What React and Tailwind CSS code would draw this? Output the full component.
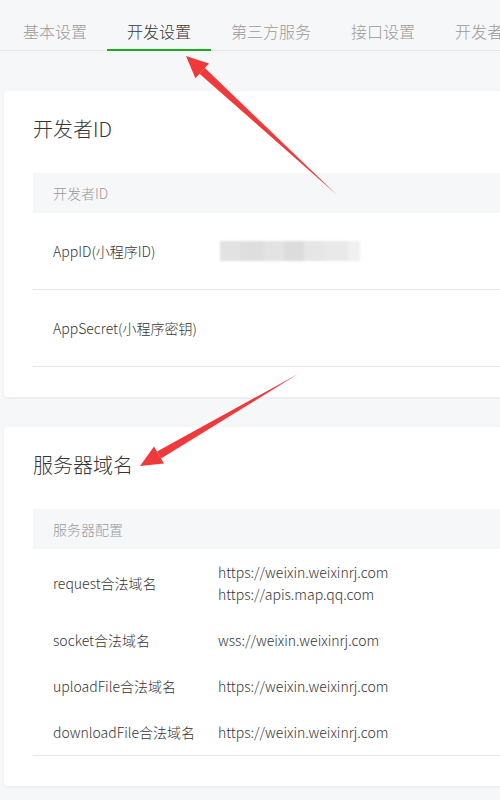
import React from 'react';

const tabs = ['基本设置', '开发设置', '第三方服务', '接口设置', '开发者工具'];

const serverRows = [
    { label: 'request合法域名', values: ['https://weixin.weixinrj.com', 'https://apis.map.qq.com'] },
    { label: 'socket合法域名', values: ['wss://weixin.weixinrj.com'] },
    { label: 'uploadFile合法域名', values: ['https://weixin.weixinrj.com'] },
    { label: 'downloadFile合法域名', values: ['https://weixin.weixinrj.com'] },
];

const Card = ({ title, head, children }) => (
    <div className="bg-white rounded shadow-[0_1px_3px_rgba(0,0,0,0.06)] pt-6 pb-[30px] pl-[29px]">
        <h2 className="text-xl leading-7 text-[#353535]">{title}</h2>
        <div className="mt-[30px]">
            <div className="h-10 flex items-center px-5 bg-[#f6f7f9] text-sm text-[#9a9a9a]">{head}</div>
            {children}
        </div>
    </div>
);

// red annotation arrows drawn on top of the page
const Arrows = () => (
    <svg className="absolute inset-0 pointer-events-none" width="500" height="800" viewBox="0 0 500 800">
        <polygon points="337,195 199.5,73.8 204.9,68" fill="#f0393b" />
        <polygon points="186,56 195.4,78.3 209,63.5" fill="#f0393b" />
        <polygon points="298,374 161,458.5 157,451.5" fill="#f0393b" />
        <polygon points="140,466 164,463.6 154,446.4" fill="#f0393b" />
    </svg>
);

export default function App() {
    return (
        <div
            className="relative w-[500px] h-[800px] overflow-hidden bg-[#f6f7f9] font-light"
            style={{ fontFamily: '"Noto Sans CJK SC", "Noto Sans", sans-serif' }}
        >
            <div className="w-[560px]">
                {/* Tabs */}
                <div className="flex pl-[3px] border-b border-[#e5e5e5]">
                    {tabs.map((t, i) => (
                        <div
                            key={t}
                            className={`px-5 pt-[19px] pb-[6px] -mb-px text-base leading-6 whitespace-nowrap border-b-2 ${
                                i === 1 ? 'border-[#1aad19] text-[#353535]' : 'border-transparent text-[#9a9a9a]'
                            }`}
                        >
                            {t}
                        </div>
                    ))}
                </div>

                <div className="pl-1 pt-[40px] flex flex-col gap-[30px]">
                    <Card title="开发者ID" head="开发者ID">
                        <div className="h-[77px] flex items-center px-5 border-b border-[#e7e7e7] text-sm text-[#353535]">
                            <div className="w-[165px] shrink-0">AppID(小程序ID)</div>
                            <div className="flex h-5 ml-[2px] blur-[1px]">
                                <div className="w-5 bg-[#e2e2e2]" />
                                <div className="w-6 bg-[#dedede]" />
                                <div className="w-5 bg-[#e3e3e3]" />
                                <div className="w-5 bg-[#dcdcdc]" />
                                <div className="w-5 bg-[#e6e6e6]" />
                                <div className="w-6 bg-[#e9e9e9]" />
                                <div className="w-3 bg-[#f0f0f0]" />
                            </div>
                        </div>
                        <div className="h-[77px] flex items-center px-5 border-b border-[#e7e7e7] text-sm text-[#353535]">
                            <div className="w-[165px] shrink-0">AppSecret(小程序密钥)</div>
                        </div>
                    </Card>

                    <Card title="服务器域名" head="服务器配置">
                        <div className="border-b border-[#e7e7e7]">
                            {serverRows.map((r) => (
                                <div key={r.label} className="flex items-center px-5 py-3 text-sm leading-[22px] text-[#353535]">
                                    <div className="w-[165px] shrink-0 whitespace-nowrap">{r.label}</div>
                                    <div className="flex flex-col">
                                        {r.values.map((v) => (
                                            <span key={v}>{v}</span>
                                        ))}
                                    </div>
                                </div>
                            ))}
                        </div>
                    </Card>
                </div>
            </div>
            <Arrows />
        </div>
    );
}
